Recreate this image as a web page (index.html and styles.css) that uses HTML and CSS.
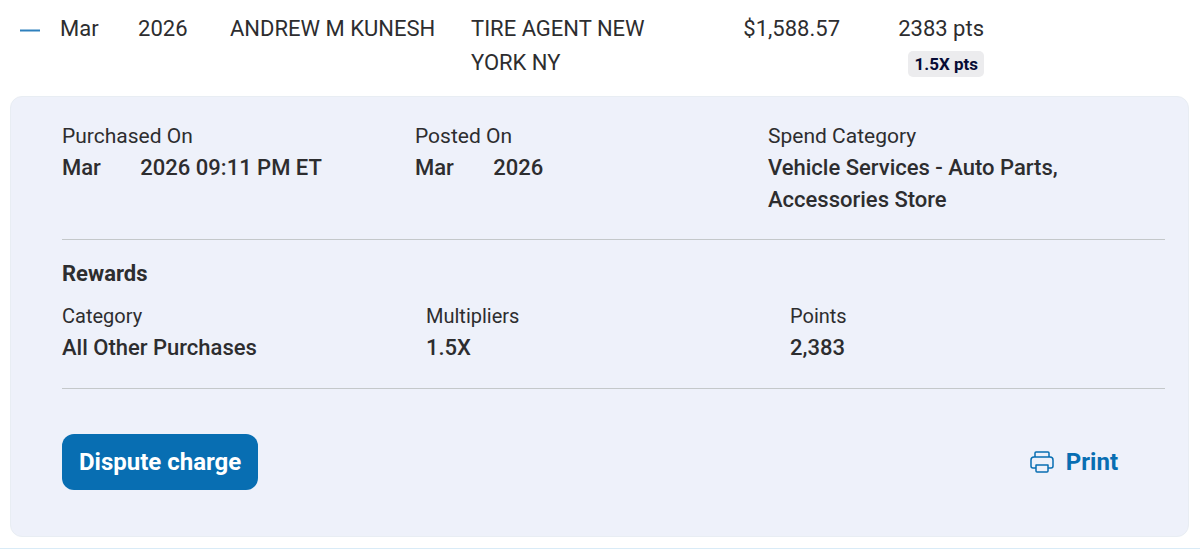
FILE: index.html
```
<!DOCTYPE html>
<html lang="en">
<head>
  <meta charset="UTF-8" />
  <meta name="viewport" content="width=device-width, initial-scale=1.0" />
  <title>Transactions</title>
  <link rel="stylesheet" href="styles.css">
</head>
<body>
  <table class="transactions">
    <tr class="summary">
      <td class="toggle-cell">
        <button class="toggle" type="button" aria-label="Hide details" aria-expanded="true">
          <svg width="22" height="22" viewBox="0 0 22 22"><path d="M1 11.5h20" stroke="currentColor" stroke-width="2" /></svg>
        </button>
      </td>
      <td class="date">Mar <span class="year">2026</span></td>
      <td class="name">ANDREW M KUNESH</td>
      <td class="merchant">TIRE AGENT NEW YORK NY</td>
      <td class="amount">$1,588.57</td>
      <td class="points">2383 pts<br><span class="badge">1.5X pts</span></td>
      <td class="spacer"></td>
    </tr>
    <tr>
      <td colspan="7">
        <div class="panel">
          <dl class="details">
            <div>
              <dt>Purchased On</dt>
              <dd>Mar <span class="year">2026</span> 09:11 PM ET</dd>
            </div>
            <div>
              <dt>Posted On</dt>
              <dd>Mar <span class="year">2026</span></dd>
            </div>
            <div>
              <dt>Spend Category</dt>
              <dd>Vehicle Services - Auto Parts, Accessories Store</dd>
            </div>
          </dl>

          <section class="rewards">
            <h2>Rewards</h2>
            <dl class="rewards-list">
              <div>
                <dt>Category</dt>
                <dd>All Other Purchases</dd>
              </div>
              <div>
                <dt>Multipliers</dt>
                <dd>1.5X</dd>
              </div>
              <div>
                <dt>Points</dt>
                <dd>2,383</dd>
              </div>
            </dl>
          </section>

          <div class="actions">
            <button class="dispute" type="button">Dispute charge</button>
            <button class="print" type="button">
              <svg width="24" height="24" viewBox="0 0 24 24" fill="none" stroke="currentColor" stroke-width="1.5" stroke-linejoin="round">
                <path d="M5 7V3a1 1 0 0 1 1-1h12a1 1 0 0 1 1 1v4" />
                <path d="M6 18H3a2 2 0 0 1-2-2v-6a3 3 0 0 1 3-3h16a3 3 0 0 1 3 3v6a2 2 0 0 1-2 2h-3" />
                <path d="M6 15h12v6a1 1 0 0 1-1 1H7a1 1 0 0 1-1-1z" />
              </svg>
              Print
            </button>
          </div>
        </div>
      </td>
    </tr>
  </table>
</body>
</html>
```
FILE: styles.css
```
* {
  box-sizing: border-box;
}

body {
  font-family: Roboto, "Liberation Sans", sans-serif;
  font-size: 22px;
  color: #2d2d2f;
  background: #ffffff;
  margin: 0;
}

button {
  font-family: inherit;
  border: none;
  cursor: pointer;
}

.transactions {
  width: 100%;
  table-layout: fixed;
  border-collapse: separate;
  border-spacing: 0;
  border-bottom: 1px solid #d9ebf7;
}

td {
  padding: 0;
  vertical-align: top;
}

.summary td {
  height: 96px;
  padding-top: 12px;
  line-height: 34px;
}

.toggle-cell {
  width: 60px;
}

.toggle {
  display: flex;
  align-items: center;
  justify-content: center;
  width: 60px;
  height: 36px;
  padding: 0;
  background: none;
  color: #2f80bd;
}

.date {
  width: 170px;
}

.year {
  margin-left: 34px;
}

.name {
  width: 241px;
}

.amount {
  width: 140px;
  text-align: right;
}

.points {
  width: 144px;
  text-align: right;
}

.spacer {
  width: 216px;
}

.badge {
  display: inline-block;
  padding: 0 6px;
  border-radius: 5px;
  background: #ececee;
  color: #070b35;
  font-size: 17px;
  font-weight: 700;
  line-height: 26px;
}

.panel {
  margin: 0 11px 11px 10px;
  padding: 23px 23px 46px 51px;
  border: 1px solid #e8edf3;
  border-radius: 12px;
  background: #eef1fa;
  line-height: 32px;
}

dl {
  display: grid;
  grid-template-columns: repeat(3, 1fr);
  margin: 0;
}

dt {
  font-size: 21px;
}

dd {
  margin: 0;
  font-weight: 500;
}

.details {
  padding: 0 44px 23px 0;
  border-bottom: 1px solid #c4c8ca;
}

.rewards {
  padding: 18px 0 24px;
  border-bottom: 1px solid #c4c8ca;
}

h2 {
  margin: 0 0 10px;
  font-size: 22px;
  font-weight: 700;
}

.rewards-list {
  padding-right: 11px;
}

.rewards-list dt {
  font-size: 20px;
}

.actions {
  display: flex;
  align-items: center;
  justify-content: space-between;
  padding: 45px 47px 0 0;
}

.dispute {
  padding: 0 17px;
  border-radius: 12px;
  background: #086eb2;
  color: #ffffff;
  font-size: 24px;
  font-weight: 700;
  line-height: 56px;
}

.print {
  display: flex;
  align-items: center;
  gap: 12px;
  padding: 0;
  background: none;
  color: #086eb2;
  font-size: 24px;
  font-weight: 700;
}
```
